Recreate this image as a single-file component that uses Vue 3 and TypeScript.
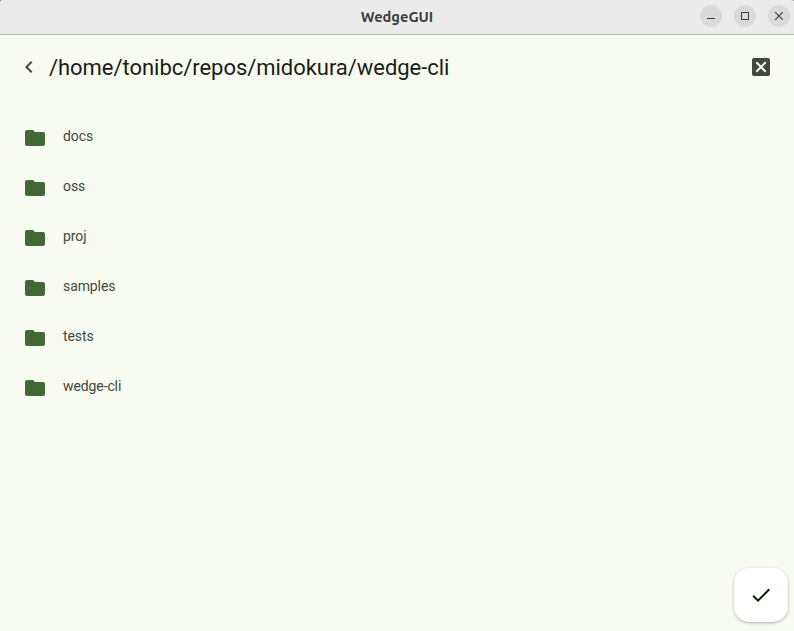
<script setup lang="ts">
import { ref } from 'vue'

const path = ref<string>('/home/tonibc/repos/midokura/wedge-cli')
const folders = ref<string[]>(['docs', 'oss', 'proj', 'samples', 'tests', 'wedge-cli'])
</script>

<template>
  <div class="window">
    <header class="titlebar">
      <span class="title">WedgeGUI</span>
      <div class="controls">
        <button class="control" aria-label="Minimize">
          <svg width="22" height="22" viewBox="0 0 22 22"><path d="M7 13h8v1H7z" fill="#3d3d3d" /></svg>
        </button>
        <button class="control" aria-label="Maximize">
          <svg width="22" height="22" viewBox="0 0 22 22"><rect x="7.5" y="7.5" width="7" height="7" fill="none" stroke="#3d3d3d" /></svg>
        </button>
        <button class="control" aria-label="Close">
          <svg width="22" height="22" viewBox="0 0 22 22"><path d="M7.2 7.2l7.6 7.6M14.8 7.2l-7.6 7.6" stroke="#3d3d3d" stroke-width="1.2" /></svg>
        </button>
      </div>
    </header>

    <main class="content">
      <div class="toolbar">
        <button class="icon-button" aria-label="Back">
          <svg width="24" height="24" viewBox="0 0 24 24"><path d="M15.41 7.41 14 6l-6 6 6 6 1.41-1.41L10.83 12z" fill="#43483f" /></svg>
        </button>
        <h1 class="path">{{ path }}</h1>
        <button class="icon-button" aria-label="Cancel">
          <svg width="24" height="24" viewBox="0 0 24 24"><path d="M19 3H5a2 2 0 0 0-2 2v14a2 2 0 0 0 2 2h14a2 2 0 0 0 2-2V5a2 2 0 0 0-2-2zm-1.6 13L16 17.4l-4-4-4 4L6.6 16l4-4-4-4L8 6.6l4 4 4-4L17.4 8l-4 4z" fill="#43483f" /></svg>
        </button>
      </div>

      <ul class="folders">
        <li v-for="name in folders" :key="name" class="folder">
          <svg width="24" height="24" viewBox="0 0 24 24"><path d="M10 4H4c-1.1 0-2 .9-2 2v12c0 1.1.9 2 2 2h16c1.1 0 2-.9 2-2V8c0-1.1-.9-2-2-2h-8z" fill="#416835" /></svg>
          <span class="name">{{ name }}</span>
        </li>
      </ul>
    </main>

    <button class="fab" aria-label="Confirm">
      <svg width="24" height="24" viewBox="0 0 24 24"><path d="M9 16.17 4.83 12l-1.42 1.41L9 19 21 7l-1.41-1.41z" fill="#022100" /></svg>
    </button>
  </div>
</template>

<style>
body {
  margin: 0;
  background: #000;
}
</style>

<style scoped>
.window {
  position: relative;
  box-sizing: border-box;
  width: 100%;
  height: 100vh;
  overflow: hidden;
  border-radius: 2px 2px 0 0;
  background: #f8fbf1;
  font-family: Roboto, sans-serif;
}

button {
  display: flex;
  align-items: center;
  justify-content: center;
  padding: 0;
  border: 0;
  background: none;
}

svg {
  display: block;
  flex: none;
}

.titlebar {
  display: grid;
  grid-template-columns: 1fr auto 1fr;
  align-items: center;
  box-sizing: border-box;
  height: 35px;
  padding: 0 4px 2px;
  border-bottom: 1px solid #b9bbb7;
  background: #ebebeb;
}

.title {
  grid-column: 2;
  padding-top: 2px;
  color: #3d3d3d;
  font: bold 14.667px/20px Ubuntu, "Noto Sans", sans-serif;
}

.controls {
  display: flex;
  justify-content: flex-end;
  gap: 12px;
}

.control {
  width: 22px;
  height: 22px;
  border-radius: 50%;
  background: #dadada;
}

.toolbar {
  display: flex;
  align-items: center;
  height: 64px;
  padding: 0 21px 0 17px;
}

.path {
  flex: 1;
  margin: 0 0 0 8px;
  padding-top: 2px;
  color: #191d17;
  font-size: 22px;
  font-weight: 400;
  letter-spacing: -0.04px;
  line-height: 28px;
}

.folders {
  margin: 0;
  padding: 14px 23px;
  list-style: none;
}

.folder {
  display: flex;
  align-items: center;
  gap: 16px;
  height: 50px;
}

.name {
  padding-bottom: 4px;
  color: #43483f;
  font-size: 14px;
  letter-spacing: -0.1px;
  line-height: 20px;
}

.fab {
  position: absolute;
  right: 6px;
  bottom: 9px;
  width: 54px;
  height: 54px;
  border-radius: 15px;
  background: #fff;
  box-shadow: 0 1px 3px rgba(0, 0, 0, 0.3);
}
</style>
